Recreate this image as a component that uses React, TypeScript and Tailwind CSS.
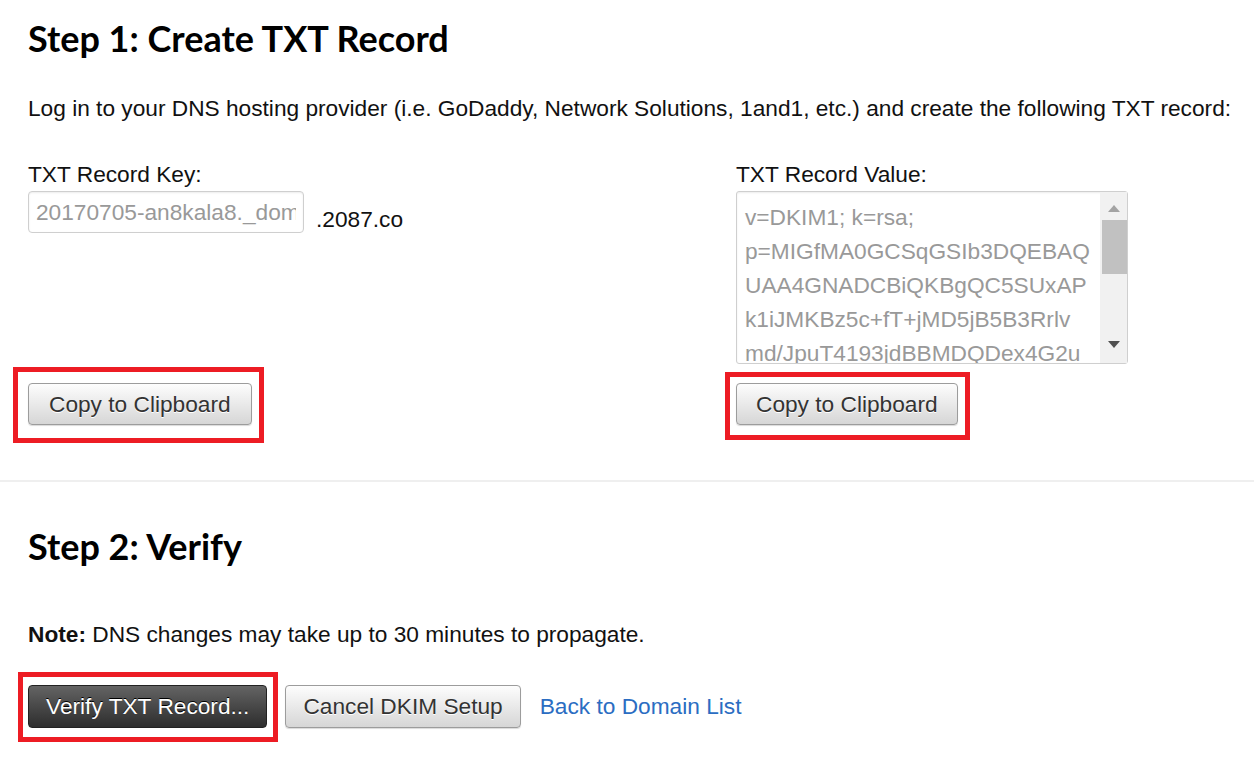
const lines = [
  "v=DKIM1; k=rsa;",
  "p=MIGfMA0GCSqGSIb3DQEBAQ",
  "UAA4GNADCBiQKBgQC5SUxAP",
  "k1iJMKBz5c+fT+jMD5jB5B3Rrlv",
  "md/JpuT4193jdBBMDQDex4G2u",
];

const grayBtn =
  "h-[42px] rounded-[4px] border border-[#9c9c9c] bg-gradient-to-b from-[#fdfdfd] to-[#d6d6d6] text-[22.7px] leading-none text-[#333] [text-shadow:0_1px_0_#fff] shadow-[0_1px_1px_rgba(0,0,0,0.15)]";

const App: React.FC = () => {
  return (
    <div className="min-h-[759px] w-[1254px] bg-white text-black font-['Liberation_Sans',Arial,sans-serif]">
      <div className="pl-[28px]">
        <h1 className="pt-[17px] text-[36px] leading-[43px] font-bold font-['Lato',sans-serif]">
          Step 1: Create TXT Record
        </h1>
        <p className="mt-[35px] text-[22.7px] leading-[26px] text-[#111] whitespace-nowrap">
          Log in to your DNS hosting provider (i.e. GoDaddy, Network Solutions, 1and1, etc.) and create the following TXT record:
        </p>

        <div className="mt-[40px] grid grid-cols-[708px_1fr] gap-y-[19px]">
          <div>
            <div className="text-[22.7px] leading-[26px] mb-[4px] text-[#111]">TXT Record Key:</div>
            <div className="flex items-start">
              <input
                readOnly
                value="20170705-an8kala8._domainkey"
                className="h-[42px] w-[276px] rounded-[4px] border border-[#cfcfcf] px-[7px] text-[22.7px] text-[#999] outline-none shadow-[inset_0_1px_2px_rgba(0,0,0,0.08)]"
              />
              <span className="ml-[12px] mt-[15px] text-[22.7px] leading-[26px] text-[#111]">.2087.co</span>
            </div>
          </div>

          <div>
            <div className="text-[22.7px] leading-[26px] mb-[4px] text-[#111]">TXT Record Value:</div>
            <div className="flex h-[173px] w-[392px] rounded-[3px] border border-[#cfcfcf] shadow-[inset_0_1px_2px_rgba(0,0,0,0.08)]">
              <div className="flex-1 overflow-hidden pl-[8px] pt-[8px] text-[22.7px] leading-[34px] text-[#999] whitespace-nowrap">
                {lines.map((l) => (
                  <div key={l}>{l}</div>
                ))}
              </div>
              <div className="flex w-[27px] flex-col bg-[#f1f1f1]">
                <div className="flex h-[28px] items-end justify-center pb-[8px]">
                  <svg width="12" height="7" viewBox="0 0 12 7">
                    <path d="M6 0 L12 7 L0 7 Z" fill="#a3a3a3" />
                  </svg>
                </div>
                <div className="ml-[2px] h-[54px] bg-[#c1c1c1]" />
                <div className="flex-1" />
                <div className="flex h-[28px] items-start justify-center pt-[6px]">
                  <svg width="12" height="7" viewBox="0 0 12 7">
                    <path d="M0 0 L12 0 L6 7 Z" fill="#505050" />
                  </svg>
                </div>
              </div>
            </div>
          </div>

          <div>
            <div className="relative inline-block">
              <button className={`${grayBtn} px-[20px]`}>Copy to Clipboard</button>
              <div className="pointer-events-none absolute -left-[15px] -right-[12px] -top-[16px] -bottom-[18px] border-[5px] border-[#ed1c24]" />
            </div>
          </div>
          <div>
            <div className="relative inline-block">
              <button className={`${grayBtn} px-[19px]`}>Copy to Clipboard</button>
              <div className="pointer-events-none absolute -left-[11px] -right-[12px] -top-[11px] -bottom-[15px] border-[5px] border-[#ed1c24]" />
            </div>
          </div>
        </div>
      </div>

      <div className="mt-[55px] h-[2px] bg-[#efefef]" />

      <div className="pl-[28px]">
        <h2 className="mt-[43px] text-[36px] leading-[43px] font-bold font-['Lato',sans-serif]">
          Step 2: Verify
        </h2>
        <p className="mt-[53px] text-[22.7px] leading-[26px] text-[#111]">
          <b>Note:</b> DNS changes may take up to 30 minutes to propagate.
        </p>
        <div className="mt-[38px] flex items-center">
          <div className="relative inline-block">
            <button className="h-[43px] rounded-[4px] border border-[#222] bg-gradient-to-b from-[#646464] to-[#2e2e2e] px-[17px] text-[22.7px] leading-none text-white [text-shadow:0_-1px_0_#000]">
              Verify TXT Record...
            </button>
            <div className="pointer-events-none absolute -left-[10px] -right-[11px] -top-[13px] -bottom-[14px] border-[5px] border-[#ed1c24]" />
          </div>
          <button className={`${grayBtn} ml-[18px] h-[43px] px-[17px]`}>Cancel DKIM Setup</button>
          <a href="#" className="ml-[19px] text-[22.7px] text-[#2b6dc2]">
            Back to Domain List
          </a>
        </div>
      </div>
    </div>
  );
};

export default App;
